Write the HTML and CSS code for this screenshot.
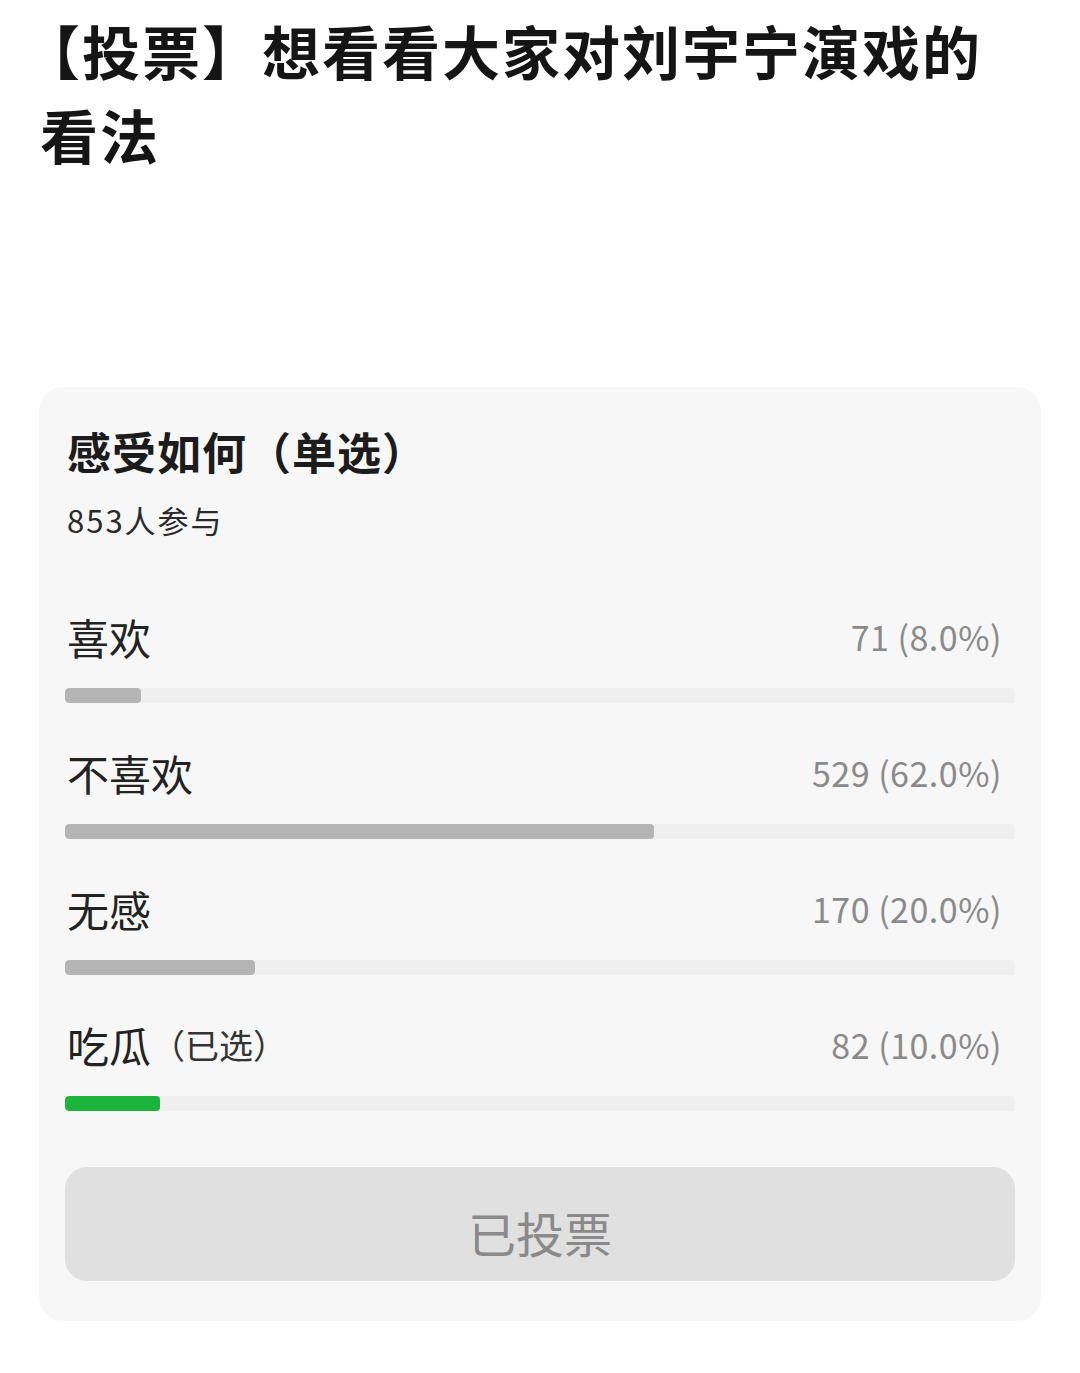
FILE: index.html
```html
<!DOCTYPE html>
<html lang="zh-CN">
<head>
<meta charset="utf-8">
<link rel="stylesheet" href="styles.css">
</head>
<body>
<h1 class="post-title">【投票】想看看大家对刘宇宁演戏的<br>看法</h1>
<section class="poll">
  <h2 class="poll-title">感受如何（单选）</h2>
  <div class="poll-count">853人参与</div>
  <div class="options">
    <div class="option">
      <div class="option-row"><span class="option-label">喜欢</span><span class="option-num">71 (8.0%)</span></div>
      <div class="track"><div class="fill" style="width:8%"></div></div>
    </div>
    <div class="option">
      <div class="option-row"><span class="option-label">不喜欢</span><span class="option-num">529 (62.0%)</span></div>
      <div class="track"><div class="fill" style="width:62%"></div></div>
    </div>
    <div class="option">
      <div class="option-row"><span class="option-label">无感</span><span class="option-num">170 (20.0%)</span></div>
      <div class="track"><div class="fill" style="width:20%"></div></div>
    </div>
    <div class="option">
      <div class="option-row"><span class="option-label">吃瓜<span class="chosen">（已选）</span></span><span class="option-num">82 (10.0%)</span></div>
      <div class="track"><div class="fill fill-green" style="width:10%"></div></div>
    </div>
  </div>
  <div class="vote-btn">已投票</div>
</section>
</body>
</html>
```
FILE: styles.css
```css
* { box-sizing: border-box; }
html, body {
  margin: 0;
  padding: 0;
  background: #ffffff;
}
body {
  width: 1080px;
  height: 1373px;
  overflow: hidden;
  font-family: "Noto Sans CJK SC", "Noto Sans", sans-serif;
}
.post-title {
  margin: 8px 0 0 40px;
  text-indent: -18px;
  font-size: 58px;
  line-height: 84px;
  font-weight: 700;
  color: #151515;
  letter-spacing: 2px;
  white-space: nowrap;
}
.poll {
  margin: 211px 39px 0 39px;
  background: #f7f7f7;
  border-radius: 24px;
  padding: 36px 26px 40px 26px;
}
.poll-title {
  margin: 0 0 0 2px;
  font-size: 44px;
  line-height: 56px;
  font-weight: 700;
  letter-spacing: 1px;
  color: #1c1c1c;
}
.poll-count {
  margin: 21px 0 0 2px;
  font-size: 31px;
  line-height: 40px;
  letter-spacing: 2px;
  color: #2a2a2a;
}
.options {
  margin-top: 70px;
  display: flex;
  flex-direction: column;
  gap: 43px;
}
.option {
  display: flex;
  flex-direction: column;
}
.option-row {
  display: flex;
  justify-content: space-between;
  align-items: center;
  height: 54px;
  padding: 0 13px 0 2px;
}
.option-label {
  font-size: 42px;
  line-height: 54px;
  color: #222222;
  display: flex;
  align-items: center;
}
.chosen {
  font-size: 34px;
  color: #333333;
}
.option-num {
  font-size: 34px;
  line-height: 54px;
  letter-spacing: 0.5px;
  color: #8a8a8a;
}
.track {
  margin-top: 24px;
  height: 15px;
  border-radius: 4px;
  background: #efefef;
  overflow: hidden;
}
.fill {
  height: 100%;
  background: #b4b4b4;
  border-radius: 4px;
}
.fill-green {
  background: #1cb43a;
}
.vote-btn {
  margin-top: 56px;
  height: 114px;
  padding-top: 16px;
  border-radius: 22px;
  background: #e0e0e0;
  color: #8a8a8a;
  font-size: 48px;
  display: flex;
  align-items: center;
  justify-content: center;
}
```
